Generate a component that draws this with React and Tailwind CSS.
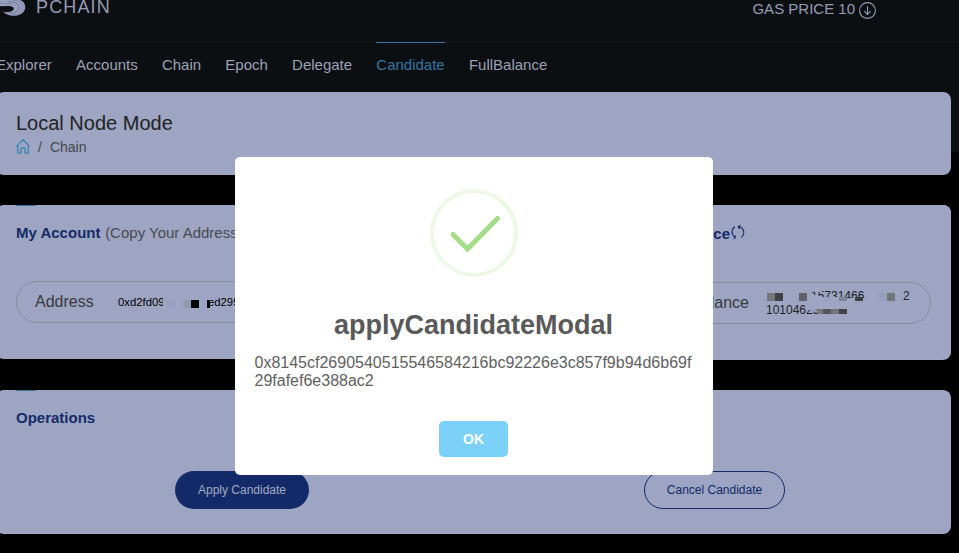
import React from "react";

const links = ["Explorer", "Accounts", "Chain", "Epoch", "Delegate", "Candidate", "FullBalance"];

function Logo() {
  return (
    <svg width="28" height="18" viewBox="0 0 28 18" className="absolute left-0 top-0" fill="none">
      <path d="M0 0H20C23.5 1.2 25.6 4.2 25.2 8C24.6 13 19.5 16 13.5 15.8C9.5 15.6 6 14.4 3 11.8C8 12.8 12 11.6 13.6 9.4C14.4 7.8 13.4 6.6 10.5 6.2C7 5.7 4 6.6 0 6Z" fill="#979fbf" />
      <path d="M8 1.8C15 1.2 18.8 4 19 7.5C19 11 15 13.4 8.5 13" stroke="#5a6179" strokeWidth="0.6" />
      <path d="M13 .3C20 .5 23.2 4 22.8 8C22.2 12 18 14.6 13 14.6" stroke="#687089" strokeWidth="0.5" />
      <path d="M0 3.4C4 4.4 9 2.8 12 3.8" stroke="#687089" strokeWidth="0.6" />
    </svg>
  );
}

function HomeIcon() {
  return (
    <svg width="14" height="15" viewBox="0 0 14 15" fill="none" stroke="#2c80aa" strokeWidth="1.1" className="-mt-[2px]">
      <path d="M.4 7.3L7 .8L13.6 7.3M1.7 6.2V14H5V9H9V14H12.3V6.2" />
    </svg>
  );
}

function RefreshIcon() {
  return (
    <svg width="14" height="16" viewBox="0 0 14 16" fill="none" stroke="#1a2c68" strokeWidth="1.1">
      <path d="M4 2.8C.1 5 .1 10.4 4.2 13.6M2.6 14.6L4.4 13.7L4 11.4M10.4 13.6C14 10.6 13.6 5.4 9.6 3.2L7.2 2.6M9.4 1.2L7.2 2.6L8.5 4.9" />
    </svg>
  );
}

// Small opaque tile hiding part of a value
function Tile({ className }) {
  return <span className={"absolute " + className} />;
}

function Account() {
  return (
    <section className="relative flex h-[154px] rounded-[8px] bg-[#9da5c3]">
      <span className="absolute left-5 top-0 h-px w-5 bg-[#3f7199]" />
      <div className="flex flex-1 flex-col pl-5 pt-[18px]">
        <h2 className="h-5 whitespace-nowrap text-[15px] leading-5 text-[#494b50]">
          <b className="text-[#152b69]">My Account</b> <span className="ml-[0.5px]">(Copy Your Address)</span>
        </h2>
        <div className="relative mt-[38px] flex h-[42px] w-[430px] items-center rounded-full border border-[#858f9e] pl-[18px]">
          <span className="w-[83px] text-[16px] leading-5 text-[#383a3d]">Address</span>
          <span className="w-[90px] text-[11.3px] leading-4 text-black">0xd2fd09</span>
          <span className="text-[11.3px] leading-4 text-black">ed295</span>
          <Tile className="left-[146px] top-[14px] h-3 w-5 bg-[#9da5c3]" />
          <Tile className="left-[150px] top-[18px] h-2 w-2 bg-[#98a1c0]" />
          <Tile className="left-[166px] top-[18px] h-2 w-2 bg-[#8f9bad]" />
          <Tile className="left-[174px] top-[18px] h-2 w-2 bg-black" />
          <Tile className="left-[190px] top-[18px] h-2 w-[3px] bg-black" />
        </div>
      </div>
      <div className="flex h-[155px] w-[470px] flex-col rounded-r-[8px] bg-[#9da5c3] pt-[19px]">
        <h2 className="flex h-5 items-start pl-[185px] text-[15px] font-bold leading-5 text-[#152b69]">
          <span className="mr-px flex w-[64px] justify-end">Balance</span>
          <RefreshIcon />
        </h2>
        <div className="relative mt-[38px] flex h-[42px] w-[450px] items-center rounded-full border border-[#858f9e] pl-[209px]">
          <span className="w-[75px] text-[16px] leading-5 text-[#383a3d]"><span className="block w-[58px] text-right">Balance</span></span>
          <span className="relative block h-[30px] w-[150px] text-[12px] leading-[14px] text-[#202125]">
            <span className="flex h-[14px] pt-px">
              <span className="ml-[45px] w-[58px]">15731466</span>
              <span className="ml-[34px]">2</span>
            </span>
            <span className="mt-px block h-[14px] w-[54px]">10104623</span>
            <Tile className="left-[44px] top-[2px] h-[2px] w-[12px] bg-[#9da5c3]" />
            <Tile className="left-[45px] top-[7px] h-[7px] w-[5px] bg-[#9da5c3]" />
            <Tile className="left-[50px] top-[9px] h-[5px] w-[22px] bg-[#9da5c3]" />
            <Tile className="left-[72px] top-[10px] h-[4px] w-[30px] bg-[#9da5c3]" />
            <Tile className="left-[1px] top-[5px] h-2 w-2 bg-[#75777d]" />
            <Tile className="left-[9px] top-[5px] h-2 w-2 bg-[#404145]" />
            <Tile className="left-[33px] top-[5px] h-2 w-2 bg-[#606268]" />
            <Tile className="left-[57px] top-[9px] h-[4px] w-2 bg-[#98a1c0]" />
            <Tile className="left-[73px] top-[9px] h-[4px] w-2 bg-[#7e8490]" />
            <Tile className="left-[89px] top-[9px] h-[4px] w-2 bg-[#404145]" />
            <Tile className="left-[113px] top-[5px] h-2 w-2 bg-[#98a1bb]" />
            <Tile className="left-[121px] top-[5px] h-2 w-2 bg-[#73777b]" />
            <Tile className="left-[40px] top-[15px] h-[7px] w-[15px] bg-[#9da5c3]" />
            <Tile className="left-[49px] top-[21px] h-[5px] w-2 bg-[#75777d] [clip-path:polygon(0_0,100%_0,100%_100%,60%_100%)]" />
            <Tile className="left-[57px] top-[21px] h-[5px] w-2 bg-[#55565b]" />
            <Tile className="left-[65px] top-[21px] h-[5px] w-2 bg-[#73757a]" />
            <Tile className="left-[73px] top-[21px] h-[5px] w-2 bg-[#404145]" />
          </span>
        </div>
      </div>
    </section>
  );
}

function Modal() {
  return (
    <div className="absolute left-[235px] top-[157px] flex h-[318px] w-[478px] flex-col items-center rounded-[5px] bg-white pt-8">
      <svg width="88" height="88" viewBox="0 0 88 88" fill="none">
        <circle cx="44" cy="44" r="42" stroke="#edf8e7" strokeWidth="4" />
        <path d="M23 45.5L37.5 60L67.5 29.5" stroke="#a5dc86" strokeWidth="5" strokeLinecap="round" />
      </svg>
      <h1 className="mr-px mt-[32px] h-8 text-[27px] font-bold leading-8 text-[#595959]">applyCandidateModal</h1>
      <p className="mt-[13px] w-[439px] whitespace-nowrap text-[16px] leading-[18px] text-[#616161]">
        0x8145cf2690540515546584216bc92226e3c857f9b94d6b69f
        <br />
        29fafef6e388ac2
      </p>
      <button className="mr-[2px] mt-[31px] h-9 w-[69px] rounded-[5px] bg-[#7cd1f9] pl-px text-[14px] font-bold text-white">OK</button>
    </div>
  );
}

export default function App() {
  return (
    <div className="relative h-[553px] w-[959px] overflow-hidden bg-[linear-gradient(#0c0f12_152px,#000_152px)] [font-family:'Liberation_Sans',Arial,sans-serif]">
      <header className="flex h-[42px] items-start justify-between border-b border-[#15191b] pl-9 pr-[83px] text-[#979cb4]">
        <Logo />
        <div className="-mt-[4px] text-[18px] leading-[22px] tracking-[1.15px]">PCHAIN</div>
        <div className="flex gap-[4px] text-[15px] leading-[18px]">
          <span>GAS PRICE 10</span>
          <svg width="17" height="19" viewBox="0 0 17 19" fill="none" stroke="#979cb4" strokeWidth="1.1">
            <circle cx="8.5" cy="10.5" r="7.9" />
            <path d="M8.5 6.2V14.3M5.3 11.2L8.5 14.4L11.7 11.2" />
          </svg>
        </div>
      </header>
      <nav className="-ml-1 flex h-[50px] gap-[24.2px] text-[15px] leading-[46px] text-[#9da1b7]">
        {links.map((l) => (
          <span key={l} className={l === "Candidate" ? "border-t border-[#3475a3] text-[#3475a3] leading-[44px]" : ""}>{l}</span>
        ))}
      </nav>
      <main className="-ml-1 flex w-[955px] flex-col">
        <section className="h-[83px] rounded-[8px] bg-[#9da5c3] pl-5 pt-[19px]">
          <h1 className="text-[20px] leading-6 text-[#22231f]">Local Node Mode</h1>
          <div className="mt-[3px] flex h-[18px] items-center text-[14px] leading-[18px] text-[#45484c]">
            <HomeIcon />
            <span className="ml-2">/</span>
            <span className="ml-2">Chain</span>
          </div>
        </section>
        <div className="h-[30px]" />
        <Account />
        <section className="relative mt-[31px] h-[144px] rounded-[8px] bg-[#9da5c3] pt-[18px]">
          <span className="absolute left-5 top-0 h-px w-5 bg-[#3f7199]" />
          <h2 className="pl-5 text-[15px] font-bold leading-5 text-[#152b69]">Operations</h2>
          <div className="mt-[43px] flex pl-[179px]">
            <button className="h-[38px] w-[134px] rounded-full bg-[#132a69] text-[12px] text-[#a3a9bf]">Apply Candidate</button>
            <button className="ml-[335px] h-[38px] w-[141px] rounded-full border border-[#132a69] text-[12px] text-[#132a69]">Cancel Candidate</button>
          </div>
        </section>
      </main>
      <Modal />
    </div>
  );
}
